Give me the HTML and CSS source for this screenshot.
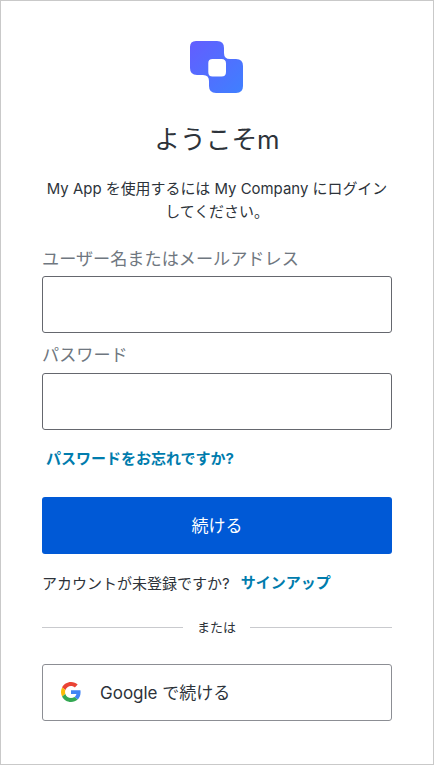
FILE: index.html
```html
<!DOCTYPE html>
<html lang="ja">
<head>
<meta charset="utf-8">
<title>ログイン</title>
<link rel="stylesheet" href="styles.css">
</head>
<body>
<main class="card">
  <svg class="logo" width="54" height="54" viewBox="0 0 54 54" aria-hidden="true">
    <defs><linearGradient id="brand" x1="0" y1="0" x2="1" y2="1"><stop offset="0" stop-color="#635dff"/><stop offset="1" stop-color="#3f80ff"/></linearGradient></defs>
    <path fill="url(#brand)" fill-rule="evenodd" d="M7 1H28Q35 1 35 8V13Q35 19 41 19H47Q54 19 54 26V46Q54 53 47 53H27Q20 53 20 46V41Q20 35 14 35H8Q1 35 1 28V7Q1 1 7 1ZM23.5 19Q19.3 19 19.3 23V32Q19.3 36.5 23.5 36.5H32.5Q37 36.5 37 32V23.5Q37 19 32.5 19Z"/>
  </svg>
  <h1 class="title">ようこそm</h1>
  <p class="intro">My App を使用するには My Company にログインしてください。</p>
  <form class="form">
    <label class="label" for="user">ユーザー名またはメールアドレス</label>
    <input class="input" id="user" type="text">
    <label class="label label-password" for="password">パスワード</label>
    <input class="input" id="password" type="password">
    <a class="link forgot" href="#">パスワードをお忘れですか?</a>
    <button class="submit" type="button">続ける</button>
  </form>
  <p class="signup"><span class="question">アカウントが未登録ですか?</span><a class="link" href="#">サインアップ</a></p>
  <div class="divider">または</div>
  <button class="google" type="button">
    <svg width="20" height="20" viewBox="0 0 48 48" aria-hidden="true"><path fill="#EA4335" d="M24 9.5c3.54 0 6.71 1.22 9.21 3.6l6.85-6.85C35.9 2.38 30.47 0 24 0 14.62 0 6.51 5.38 2.56 13.22l7.98 6.19C12.43 13.72 17.74 9.5 24 9.5z"/><path fill="#4285F4" d="M46.98 24.55c0-1.57-.15-3.09-.38-4.55H24v9.02h12.94c-.58 2.96-2.26 5.48-4.78 7.18l7.73 6c4.51-4.18 7.09-10.36 7.09-17.65z"/><path fill="#FBBC05" d="M10.53 28.59c-.48-1.45-.76-2.99-.76-4.59s.27-3.14.76-4.59l-7.98-6.19C.92 16.46 0 20.12 0 24s.92 7.54 2.56 10.78l7.97-6.19z"/><path fill="#34A853" d="M24 48c6.48 0 11.93-2.13 15.89-5.81l-7.73-6c-2.15 1.45-4.92 2.3-8.16 2.3-6.26 0-11.57-4.22-13.47-9.91l-7.98 6.19C6.51 42.62 14.62 48 24 48z"/></svg>
    <span>Google で続ける</span>
  </button>
</main>
</body>
</html>
```

FILE: styles.css
```css
* { box-sizing: border-box; }
body { margin: 0; background: #fff; color: #2d333a; font-family: Inter, "Noto Sans CJK JP", sans-serif; }
.card { display: flex; flex-direction: column; height: 765px; padding: 39px 41px 0; border: 1px solid #c9c9c9; }
.logo { display: block; align-self: center; margin-right: 2px; }
.title { margin: 29px 0 0; font-size: 25.7px; line-height: 34px; font-weight: 400; text-align: center; }
.intro { margin: 21px 0 0; font-size: 14.95px; line-height: 23px; text-align: center; }
.form { display: flex; flex-direction: column; margin-top: 23px; }
.label { height: 29px; font-size: 17.15px; line-height: 24px; color: #6f7780; }
.label-password { line-height: 22px; }
.input { width: 100%; height: 57px; margin: 0 0 11px; border: 1px solid #65676e; border-radius: 3px; background: #fff; }
.link { color: #007cad; font-size: 15px; font-weight: 700; text-decoration: none; }
.forgot { margin: 6px 0 0 4px; line-height: 24px; }
.submit { height: 57px; margin-top: 26px; padding: 0 0 2px; border: 0; border-radius: 3px; background: #0059d6; color: #fff; font: inherit; font-size: 17px; }
.signup { display: flex; gap: 11px; margin: 16px 0 0; font-size: 15px; line-height: 26px; }
.question { padding-top: 1px; }
.divider { display: flex; align-items: center; gap: 14px; margin: 20px 1px 0 0; font-size: 13px; line-height: 20px; }
.divider::before, .divider::after { content: ""; flex: 1; height: 1px; background: #c9cace; }
.divider::before { margin-right: -1px; flex: 0 0 141px; margin-right: 0; }
.divider::after { margin-right: -1px; }
.google { display: flex; align-items: center; gap: 19px; height: 57px; margin-top: 27px; padding: 0 18px 2px; border: 1px solid #8c8e94; border-radius: 3px; background: #fff; color: #2d333a; font: inherit; font-size: 17px; }
```
